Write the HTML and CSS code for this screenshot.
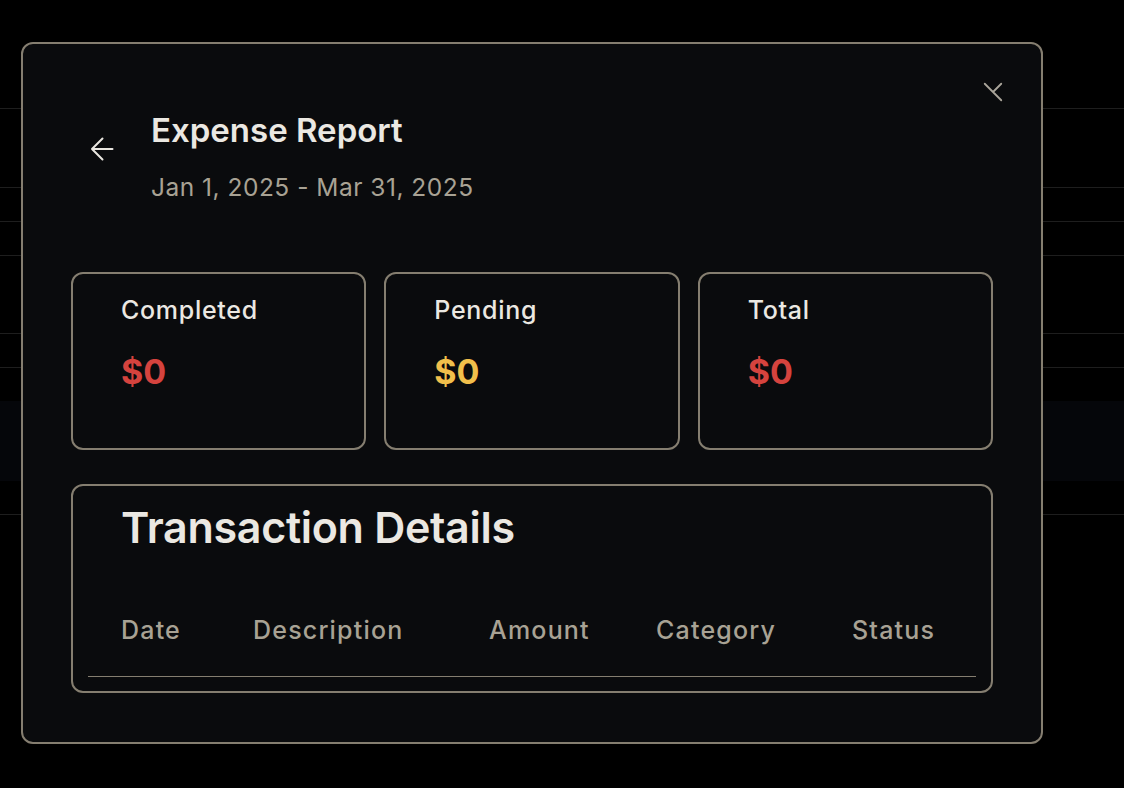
FILE: index.html
```html
<!DOCTYPE html>
<html lang="en">
<head>
<meta charset="utf-8">
<title>Expense Report</title>
<link rel="stylesheet" href="styles.css">
</head>
<body>
<div class="backdrop">
  <div class="bg-row r1"></div>
  <div class="bg-row r2"></div>
  <div class="bg-row r3"></div>
  <div class="bg-row r4"></div>
  <div class="bg-row r5"></div>
  <div class="bg-row r6"></div>
  <div class="bg-row r7"></div>
  <div class="bg-row band"></div>
  <div class="bg-row r8"></div>
</div>

<div class="modal">
  <button class="close" aria-label="Close">
    <svg width="24" height="24" viewBox="0 0 24 24" fill="none" stroke="currentColor" stroke-width="2" stroke-linecap="round"><path d="M3 3 L21 21 M21 3 L12 12"/></svg>
  </button>

  <div class="header">
    <button class="back" aria-label="Back">
      <svg width="24" height="24" viewBox="0 0 24 24" fill="none" stroke="currentColor" stroke-width="2" stroke-linecap="round" stroke-linejoin="round"><path d="M2 12 H22.5 M12.5 1.5 L2 12 L12.5 22.5"/></svg>
    </button>
    <div class="titles">
      <h1 class="title">Expense Report</h1>
      <div class="subtitle">Jan 1, 2025 - Mar 31, 2025</div>
    </div>
  </div>

  <div class="stats">
    <div class="card">
      <div class="card-label">Completed</div>
      <div class="card-value red">$0</div>
    </div>
    <div class="card">
      <div class="card-label">Pending</div>
      <div class="card-value yellow">$0</div>
    </div>
    <div class="card">
      <div class="card-label">Total</div>
      <div class="card-value red">$0</div>
    </div>
  </div>

  <div class="details">
    <h2 class="details-title">Transaction Details</h2>
    <div class="thead">
      <div class="th">Date</div>
      <div class="th">Description</div>
      <div class="th">Amount</div>
      <div class="th">Category</div>
      <div class="th">Status</div>
    </div>
  </div>
</div>
</body>
</html>
```

FILE: styles.css
```css
* { box-sizing: border-box; }

html, body {
  margin: 0;
  padding: 0;
  background: #000;
  width: 1124px;
  height: 788px;
  overflow: hidden;
  font-family: Inter, "Noto Sans", "Liberation Sans", sans-serif;
}

.backdrop {
  display: flex;
  flex-direction: column;
}

.bg-row { border-bottom: 1px solid #1e1e1e; }
.r1 { height: 109px; }
.r2 { height: 79px; }
.r3 { height: 34px; }
.r4 { height: 34px; }
.r5 { height: 78px; }
.r6 { height: 34px; }
.r7 { height: 33px; border-bottom: none; }
.band { height: 80px; background: #05060a; border-bottom: none; }
.r8 { height: 34px; }

.modal {
  position: absolute;
  left: 21px;
  top: 42px;
  width: 1022px;
  height: 702px;
  background: #0a0b0d;
  border: 2px solid #857e70;
  border-radius: 12px;
  padding: 66px 48px 48px;
}

.close {
  position: absolute;
  right: 35px;
  top: 36px;
  width: 24px;
  height: 24px;
  padding: 0;
  border: 0;
  background: none;
  color: #aaa59a;
}
.close svg { display: block; width: 22px; height: 22px; }

.header {
  display: flex;
  align-items: flex-start;
  padding-left: 19px;
}

.back {
  width: 24px;
  height: 24px;
  padding: 0;
  border: 0;
  background: none;
  color: #e9e6e0;
  margin-top: 27px;
  margin-right: 37px;
}
.back svg { display: block; }

.title {
  margin: 0;
  font-size: 33px;
  line-height: 40px;
  font-weight: 600;
  color: #ebe8e2;
}

.subtitle {
  margin-top: 23px;
  font-size: 24.5px;
  line-height: 29px;
  color: #a8a294;
  letter-spacing: 0.5px;
}

.stats {
  display: grid;
  grid-template-columns: repeat(3, 1fr);
  gap: 18px;
  margin-top: 70px;
}

.card {
  height: 178px;
  border: 2px solid #857e70;
  border-radius: 12px;
  padding: 21px 48px 0;
}

.card-label {
  font-size: 25px;
  line-height: 30px;
  font-weight: 500;
  color: #ebe8e2;
  letter-spacing: 0.7px;
}

.card-value {
  margin-top: 26px;
  font-size: 34px;
  line-height: 41px;
  font-weight: 700;
}
.red { color: #d5433e; }
.yellow { color: #f1bf4b; }

.details {
  margin-top: 34px;
  height: 209px;
  border: 2px solid #857e70;
  border-radius: 12px;
  padding: 15px 15px 0;
}

.details-title {
  margin: 0;
  padding-left: 33px;
  font-size: 43px;
  line-height: 52px;
  font-weight: 600;
  color: #ebe8e2;
  letter-spacing: -0.3px;
}

.thead {
  display: grid;
  grid-template-columns: 132px 236px 167px 196px 156px;
  margin-top: 62px;
  border-bottom: 1px solid #857e70;
  padding-bottom: 31px;
}

.th {
  padding-left: 33px;
  font-size: 25px;
  line-height: 30px;
  font-weight: 500;
  color: #a8a294;
  letter-spacing: 1.2px;
}
```
